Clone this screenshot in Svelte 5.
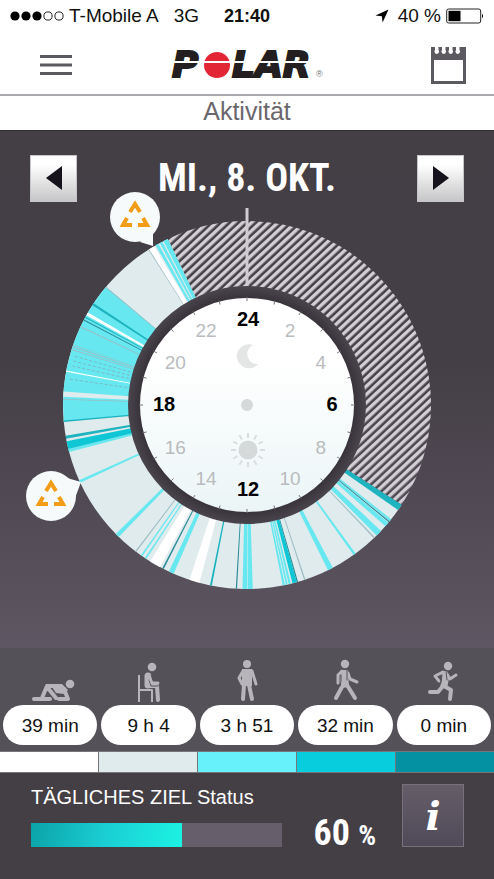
<script>
    const levels = [
        { name: "rest", label: "39 min" },
        { name: "sit", label: "9 h 4" },
        { name: "low", label: "3 h 51" },
        { name: "medium", label: "32 min" },
        { name: "high", label: "0 min" }
    ];

    const goal = 60;

    // [start angle, end angle, kind], clockwise from midnight
    const segments = [
        [123, 334.5, "sit"],
        [122.8, 124.8, "teal"],
        [128.4, 129.1, "low"],
        [129.2, 129.6, "dark"],
        [129.8, 131.2, "low"],
        [133.2, 135.2, "low"],
        [136, 136.4, "grey"],
        [143.8, 144.6, "low"],
        [152.2, 153.9, "low"],
        [161.5, 161.9, "grey"],
        [163.9, 164.3, "dark"],
        [164.3, 165.7, "medium"],
        [166.2, 166.9, "low"],
        [167.2, 167.8, "low"],
        [168.1, 168.8, "low"],
        [178.2, 179.7, "low"],
        [179.9, 181.4, "low"],
        [183.1, 183.5, "dark"],
        [191, 191.6, "teal"],
        [195, 198.2, "rest"],
        [203.5, 205.1, "low"],
        [206.9, 207.4, "dark"],
        [208.2, 211.8, "rest"],
        [213.2, 213.7, "low"],
        [214.7, 215.2, "low"],
        [217, 217.4, "grey"],
        [224.2, 225.5, "low"],
        [245, 245.9, "low"],
        [255.2, 256.2, "low"],
        [256.2, 258.6, "medium"],
        [259.4, 260.4, "teal"],
        [264.9, 310, "low"],
        [264.7, 265.2, "teal"],
        [271.6, 271.9, "grey"],
        [272.6, 274.2, "sit"],
        [280.4, 280.8, "rest"],
        [287.4, 287.7, "grey"],
        [288.3, 288.6, "grey"],
        [289, 289.2, "grey"],
        [295, 295.3, "grey"],
        [297.3, 297.7, "dark"],
        [298.3, 298.7, "teal"],
        [299.2, 300.2, "rest"],
        [302.8, 303.6, "teal"],
        [309.7, 310, "grey"],
        [327.6, 327.9, "grey"],
        [327.9, 329.7, "rest"],
        [330.2, 331.2, "low"],
        [331.7, 332.6, "low"],
        [333, 334.5, "low"]
    ];

    const dashes = [278.3, 282.6, 284.2, 285.8];
    const hours = [24, 2, 4, 6, 8, 10, 12, 14, 16, 18, 20, 22];
    const ticks = Array.from({ length: 24 }, (_, i) => i * 15);
    const rays = Array.from({ length: 12 }, (_, i) => i * 30);
    const pins = [
        { x: -112, y: 16, tail: "M5 25 L18 29 L18 13 Z" },
        { x: -196, y: 295, tail: "M16 -18 L30 -14 L23 5 Z" }
    ];

    const point = (angle, radius) => {
        const a = angle * Math.PI / 180;
        return `${(Math.sin(a) * radius).toFixed(2)} ${(-Math.cos(a) * radius).toFixed(2)}`;
    }

    const sector = (from, to) => {
        const large = to - from > 180 ? 1 : 0;
        return `M${point(from, 184)} A184 184 0 ${large} 1 ${point(to, 184)} L${point(to, 118)} A118 118 0 ${large} 0 ${point(from, 118)} Z`;
    }

    const hourX = hour => Math.sin(hour * Math.PI / 12) * 84 + 1;
    const hourY = hour => -Math.cos(hour * Math.PI / 12) * 85 + 6;
</script>

<div class="app">
    <div class="status-bar">
        <div class="carrier">
            <svg class="signal" viewBox="0 0 54 12" aria-hidden="true">
                <circle cx="5" cy="6" r="4.6" />
                <circle cx="16" cy="6" r="4.6" />
                <circle cx="27" cy="6" r="4.6" />
                <circle class="empty" cx="38" cy="6" r="4.1" />
                <circle class="empty" cx="49" cy="6" r="4.1" />
            </svg>
            <span>T-Mobile A</span>
            <span class="network">3G</span>
        </div>
        <span class="time">21:40</span>
        <div class="power">
            <svg class="location" viewBox="0 0 14 14" aria-hidden="true">
                <path d="M13.5 0.5 L7.6 13.5 L6.8 7.2 L0.5 6.6 Z" />
            </svg>
            <span>40 %</span>
            <svg class="battery" viewBox="0 0 38 16" aria-hidden="true">
                <rect class="case" x="0.7" y="1" width="34" height="14" rx="2" />
                <rect x="2.5" y="2.8" width="12" height="10.4" />
                <path d="M36 5.5 Q38 8 36 10.5 Z" />
            </svg>
        </div>
    </div>

    <header>
        <button class="icon-button" aria-label="Menü">
            <svg class="menu" viewBox="0 0 32 20" aria-hidden="true">
                <path d="M0 1.5 H32 M0 10 H32 M0 18.5 H32" />
            </svg>
        </button>
        <svg class="logo" viewBox="0 0 160 46" role="img" aria-label="Polar">
            <text x="0" y="35" class="word">P</text>
            <text x="60" y="35" class="word">LAR</text>
            <circle cx="45" cy="23" r="13" />
            <path d="M0 20 H142" />
            <text x="144" y="35" class="mark">®</text>
        </svg>
        <button class="icon-button" aria-label="Kalender">
            <svg class="calendar" viewBox="0 0 35 38" aria-hidden="true">
                <path d="M0 1 H4 V4 A2.3 2.3 0 1 0 7.5 4 V1 H11 V4 A2.3 2.3 0 1 0 14.5 4 V1 H18 V4 A2.3 2.3 0 1 0 21.5 4 V1 H25 V4 A2.3 2.3 0 1 0 28.5 4 V1 H35 V38 H0 Z M3 14 V35 H32 V14 Z" fill-rule="evenodd" />
            </svg>
        </button>
    </header>

    <h1>Aktivität</h1>

    <main>
        <div class="date-row">
            <button class="step" aria-label="Vorheriger Tag">
                <svg viewBox="0 0 16 24" aria-hidden="true"><path d="M16 0 V24 L0 12 Z" /></svg>
            </button>
            <h2>MI., 8. OKT.</h2>
            <button class="step" aria-label="Nächster Tag">
                <svg viewBox="0 0 16 24" aria-hidden="true"><path d="M0 0 V24 L16 12 Z" /></svg>
            </button>
        </div>

        <svg class="dial" viewBox="-247 0 494 400">
            <defs>
                <pattern id="hatch" width="6" height="6" patternUnits="userSpaceOnUse" patternTransform="rotate(-43)">
                    <rect width="6" height="3.4" fill="#d2ced4" />
                </pattern>
                <linearGradient id="face" x1="0" y1="0" x2="0" y2="1">
                    <stop offset="0.3" stop-color="#ffffff" />
                    <stop offset="1" stop-color="#ebf5f6" />
                </linearGradient>
                <radialGradient id="rim">
                    <stop offset="0.89" stop-color="#37323a" />
                    <stop offset="1" stop-color="#4a444d" />
                </radialGradient>
            </defs>
            <g transform="translate(0 204)">
                <path d={sector(-25.5, 122.8)} fill="url(#hatch)" />
                {#each segments as [from, to, kind]}
                    <path class={kind} d={sector(from, to)} />
                {/each}
                {#each dashes as angle}
                    <path class="dash" d="M{point(angle, 121)} L{point(angle, 181)}" />
                {/each}
                <path class="midnight" d="M0 -197 V-119" />
                <circle r="119" fill="url(#rim)" />
                <circle r="107" fill="url(#face)" />
                {#each ticks as angle}
                    <path class="tick" d="M{point(angle, 104)} L{point(angle, 108)}" />
                {/each}
                {#each hours as hour}
                    <text class="hour" class:main-hour={hour % 6 === 0} x={hourX(hour)} y={hourY(hour)}>{hour}</text>
                {/each}
                <path class="moon" d="M6 -60 A12 12 0 1 0 11 -41 A10 10 0 0 1 6 -60 Z" />
                <circle class="shade" r="6" />
                <g transform="translate(1 45)">
                    <circle class="shade" r="9.5" />
                    {#each rays as angle}
                        <path class="ray" d="M{point(angle, 12)} L{point(angle, 17)}" />
                    {/each}
                </g>
            </g>
            {#each pins as pin}
                <g class="pin" transform="translate({pin.x} {pin.y})">
                    <circle r="25" />
                    <path class="tail" d={pin.tail} />
                    <path class="arrow" d="M-5 -5 L0 -13 L5 -5" />
                    <path class="arrow" d="M-8 1 L-12 8 H-3" />
                    <path class="arrow" d="M8 1 L12 8 H3" />
                </g>
            {/each}
        </svg>
    </main>

    <section class="levels">
        {#each levels as level}
            <div class="level">
                <svg class="figure" viewBox="-26 -44 52 44" aria-hidden="true">
                    {#if level.name === "rest"}
                        <circle cx="20" cy="-18" r="4.3" />
                        <path class="limb" d="M-16 -3 H0 M-3 -16 L-8 -4 M-3 -15 L6 -4 M-3 -16 H10 M14 -13 L18 -3 H9" />
                        <path d="M0 -18 H12 L18 -12 L14 -8 L6 -9 Z" />
                    {:else if level.name === "sit"}
                        <circle cx="3" cy="-35" r="4.3" />
                        <path class="chair" d="M-10 -27 V0 M-10 -12 H3 V0" />
                        <path class="torso" d="M-1 -26 V-17" />
                        <path class="limb" d="M-1 -16 H8 L9 -2" />
                        <path class="gap" d="M2 -27 L5 -21 L10 -21 M0 -22 L2 -16 H9" />
                        <path class="arm" d="M0 -26 L3 -19 H9" />
                    {:else if level.name === "low"}
                        <circle cx="0" cy="-38" r="4" />
                        <path d="M-5 -33 H5 L5 -16 H-5 Z" />
                        <path class="arm" d="M-4 -31 L-8 -24 L-5 -18 M5 -31 L9 -18" />
                        <path class="limb" d="M-3 -17 L-4 -3 M2 -17 L5 -3" />
                    {:else if level.name === "medium"}
                        <circle cx="0" cy="-38" r="4.2" />
                        <path d="M-4 -32 H3 L4 -15 L-3 -14 L-5 -20 Z" />
                        <path class="arm" d="M-3 -31 L-7 -27 V-19 M3 -29 L5 -23 L12 -20" />
                        <path class="limb" d="M-2 -17 L-9 -4 M2 -17 L10 -4" />
                        <path class="gap" d="M-4 -27 V-21 L-5 -16 M2 -32 V-22" />
                    {:else}
                        <circle cx="4" cy="-36" r="4.2" />
                        <path d="M-3 -31 H3 L5 -24 L3 -13 L-4 -15 L-2 -22 Z" />
                        <path class="arm" d="M-1 -30 L-9 -26 L-5 -21 M3 -28 L6 -23 L12 -27" />
                        <path class="limb" d="M0 -16 L7 -12 L6 -3 M-1 -16 L-6 -10 H-14" />
                        <path class="gap" d="M-2 -27 L-3 -20 M2 -31 L3 -22" />
                    {/if}
                </svg>
                <span class="pill">{level.label}</span>
            </div>
        {/each}
    </section>

    <div class="scale">
        {#each levels as level}
            <span class={level.name}></span>
        {/each}
    </div>

    <footer>
        <div class="goal">
            <span id="goal-label">TÄGLICHES ZIEL Status</span>
            <div class="bar" role="progressbar" aria-labelledby="goal-label" aria-valuenow={goal} aria-valuemin="0" aria-valuemax="100">
                <div class="fill" style="width: {goal}%"></div>
            </div>
        </div>
        <div class="percent">{goal} <small>%</small></div>
        <button class="info" aria-label="Info">i</button>
    </footer>
</div>

<style>
    :global(body) {
        margin: 0;
        background: #443f45;
    }

    .app {
        display: flex;
        flex-direction: column;
        min-height: 100vh;
        font-family: "Liberation Sans", Arial, sans-serif;
        background: #ffffff;
        color: #111111;
    }

    button {
        padding: 0;
        border: 0;
        background: none;
        cursor: pointer;
    }

    svg {
        display: block;
    }

    .status-bar {
        display: grid;
        grid-template-columns: 1fr auto 1fr;
        align-items: center;
        height: 32px;
        padding: 0 10px;
        font-size: 19px;
        white-space: nowrap;
    }

    .carrier,
    .power {
        display: flex;
        align-items: center;
        gap: 5px;
    }

    .power {
        justify-content: flex-end;
    }

    .signal {
        width: 54px;
        height: 12px;
    }

    .empty,
    .case {
        fill: none;
        stroke: #222222;
    }

    .network {
        margin-left: 10px;
    }

    .time {
        font-size: 18px;
        font-weight: bold;
    }

    .location {
        width: 14px;
        height: 14px;
        margin-right: 4px;
    }

    .battery {
        width: 38px;
        height: 16px;
    }

    header {
        display: flex;
        align-items: center;
        justify-content: space-between;
        height: 64px;
        box-sizing: border-box;
        padding: 6px 28px 2px 40px;
        border-bottom: 2px solid #aaa8ac;
    }

    .menu {
        width: 32px;
        height: 20px;
        stroke: #5c5960;
        stroke-width: 3;
    }

    .logo {
        width: 160px;
        height: 46px;
        overflow: visible;
    }

    .logo .word {
        font: italic bold 36px "DejaVu Sans", sans-serif;
        fill: #231f20;
        stroke: #231f20;
        stroke-width: 2;
    }

    .logo .mark {
        font-size: 9px;
        fill: #777777;
    }

    .logo circle {
        fill: #e32636;
    }

    .logo path {
        stroke: #ffffff;
        stroke-width: 2;
    }

    .calendar {
        width: 35px;
        height: 38px;
        fill: #5c5960;
    }

    h1 {
        margin: 0;
        height: 34px;
        line-height: 30px;
        font-size: 25px;
        font-weight: normal;
        text-align: center;
        color: #6a676c;
    }

    main {
        flex: 1;
        padding-top: 24px;
        border-top: 1px solid #35313a;
        box-sizing: border-box;
        background: linear-gradient(#443f45, #443e46 45%, #5e5763);
    }

    .date-row {
        display: flex;
        align-items: center;
        justify-content: space-between;
        padding: 0 30px;
        height: 46px;
    }

    h2,
    .percent {
        font-family: "Roboto Condensed", "Open Sans Condensed", "Noto Sans Condensed", "Liberation Sans Narrow", "Arial Narrow", Roboto, sans-serif;
        font-weight: bold;
        color: #ffffff;
        white-space: nowrap;
    }

    h2 {
        margin: 0;
        font-size: 38px;
        line-height: 46px;
    }

    .step {
        display: flex;
        align-items: center;
        justify-content: center;
        width: 47px;
        height: 47px;
        border: 1px solid #c8c6ca;
        background: linear-gradient(#ffffff 20%, #c6c5c7);
    }

    .step svg {
        width: 16px;
        height: 24px;
        fill: #16131c;
    }

    .dial {
        width: 100%;
        max-width: 600px;
        height: auto;
        margin: 0 auto;
        overflow: visible;
    }

    .rest { fill: #ffffff; background: #ffffff; }
    .sit { fill: #dfebec; background: #dfebec; }
    .low { fill: #67e8f0; background: #67f1fb; }
    .medium { fill: #0fc6d4; background: #08cddd; }
    .high { background: #0492a3; }
    .teal { fill: #1db4bf; }
    .dark { fill: #2b8c99; }
    .grey { fill: #9cbcc4; }

    .dash {
        stroke: #7cb9c3;
        stroke-dasharray: 3 2;
    }

    .midnight {
        stroke: #cfcbd1;
        stroke-width: 3;
    }

    .tick {
        stroke: #77747a;
        stroke-width: 1;
    }

    .hour {
        font-size: 19px;
        fill: #b9bcbe;
        text-anchor: middle;
    }

    .main-hour {
        font-size: 20px;
        font-weight: bold;
        fill: #000000;
    }

    .moon {
        fill: #e4e6e6;
    }

    .shade {
        fill: #d5d9d9;
    }

    .ray {
        stroke: #d9dddd;
        stroke-width: 2;
    }

    .pin circle,
    .tail {
        fill: #f6fafa;
    }

    .arrow {
        fill: none;
        stroke: #f39c16;
        stroke-width: 4;
    }

    .levels {
        display: grid;
        grid-template-columns: repeat(5, 1fr);
        gap: 4px;
        padding: 10px 3px 6px;
        background: #555158;
    }

    .level {
        display: flex;
        flex-direction: column;
        align-items: center;
        gap: 3px;
    }

    .figure {
        width: 52px;
        height: 44px;
        fill: #b7b4ba;
    }

    .limb,
    .arm,
    .chair,
    .torso,
    .gap {
        fill: none;
        stroke: #b7b4ba;
        stroke-width: 4;
        stroke-linecap: round;
        stroke-linejoin: round;
    }

    .arm {
        stroke-width: 3;
    }

    .chair {
        stroke-width: 2;
        stroke-linecap: butt;
    }

    .torso {
        stroke-width: 7;
    }

    .gap {
        stroke: #555158;
        stroke-width: 1;
    }

    .pill {
        width: 100%;
        height: 40px;
        border-radius: 20px;
        line-height: 42px;
        font-size: 19px;
        text-align: center;
        background: #ffffff;
    }

    .scale {
        display: grid;
        grid-template-columns: repeat(5, 1fr);
        gap: 1px;
        height: 20px;
        border-top: 1px solid #77747a;
        border-bottom: 1px solid #77747a;
        background: #77747a;
    }

    footer {
        display: flex;
        align-items: flex-start;
        padding: 11px 30px 32px 31px;
        background: #443f45;
        color: #ffffff;
    }

    .goal {
        flex: 1;
        font-size: 20px;
        line-height: 26px;
        white-space: nowrap;
    }

    .bar {
        height: 24px;
        margin-top: 13px;
        background: #665f6b;
    }

    .fill {
        height: 100%;
        background: linear-gradient(100deg, #0ba3a8, #1acfd4 50%, #1cf2e2);
    }

    .percent {
        margin: 35px 26px 0 31px;
        font-size: 36px;
        line-height: 28px;
    }

    .percent small {
        font-size: 28px;
        line-height: 1px;
    }

    .info {
        width: 62px;
        height: 63px;
        border: 1px solid #77717c;
        background: linear-gradient(#655e69, #504958);
        font: italic bold 40px/60px "DejaVu Serif", serif;
        color: #ffffff;
    }
</style>
